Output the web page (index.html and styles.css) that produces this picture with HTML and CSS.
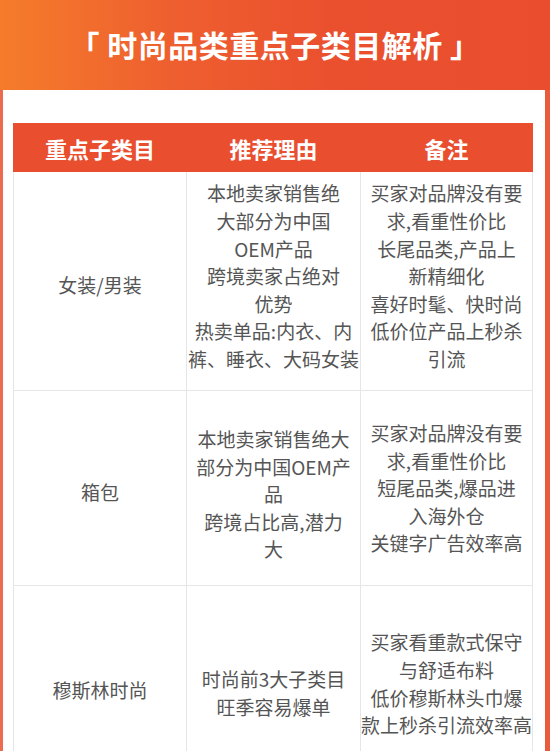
FILE: index.html
```html
<!DOCTYPE html>
<html lang="zh">
<head>
<meta charset="utf-8">
<link rel="stylesheet" href="styles.css">
</head>
<body>
<div class="page">
  <header class="banner">
    <h1 class="title">「 时尚品类重点子类目解析 」</h1>
  </header>
  <section class="panel">
    <table class="grid">
      <colgroup>
        <col class="c1"><col class="c2"><col class="c3">
      </colgroup>
      <thead>
        <tr class="head">
          <th>重点子类目</th>
          <th>推荐理由</th>
          <th>备注</th>
        </tr>
      </thead>
      <tbody>
        <tr class="r1">
          <td class="down">女装/男装</td>
          <td class="up">本地卖家销售绝<br>大部分为中国<br>OEM产品<br>跨境卖家占绝对<br>优势<br>热卖单品:内衣、内<br>裤、睡衣、大码女装</td>
          <td class="up">买家对品牌没有要<br>求,看重性价比<br>长尾品类,产品上<br>新精细化<br>喜好时髦、快时尚<br>低价位产品上秒杀<br>引流</td>
        </tr>
        <tr class="r2">
          <td class="down">箱包</td>
          <td class="lower">本地卖家销售绝大<br>部分为中国OEM产<br>品<br>跨境占比高,潜力<br>大</td>
          <td>买家对品牌没有要<br>求,看重性价比<br>短尾品类,爆品进<br>入海外仓<br>关键字广告效率高</td>
        </tr>
        <tr class="r3">
          <td>穆斯林时尚</td>
          <td class="down">时尚前3大子类目<br>旺季容易爆单</td>
          <td class="higher">买家看重款式保守<br>与舒适布料<br>低价穆斯林头巾爆<br>款上秒杀引流效率高</td>
        </tr>
      </tbody>
    </table>
  </section>
</div>
</body>
</html>
```

FILE: styles.css
```css
* { box-sizing: border-box; }
html, body { margin: 0; padding: 0; }
body {
  width: 550px;
  height: 751px;
  overflow: hidden;
  background: #ffffff;
  font-family: "Noto Sans CJK SC", "Noto Sans", sans-serif;
}
.page { width: 550px; }
.banner {
  height: 90px;
  background: linear-gradient(90deg, #f57c2b 0%, #ee5e2f 32%, #ea502e 60%, #e94d2e 100%);
  display: flex;
  align-items: center;
  justify-content: center;
}
.title {
  margin: 0;
  color: #ffffff;
  font-size: 30px;
  font-weight: 700;
  letter-spacing: 0.5px;
  line-height: 1;
  padding-bottom: 2px;
}
.panel {
  background: #ffffff;
  border-left: 3px solid #ec6a4e;
  border-right: 5px solid #ea5a3c;
  padding: 33px 13px 0 10px;
  min-height: 661px;
}
.grid {
  width: 519px;
  border-collapse: collapse;
  table-layout: fixed;
}
.c1 { width: 173px; }
.c2 { width: 174px; }
.c3 { width: 172px; }
.head th {
  height: 48px;
  background: #e94e2f;
  color: #ffffff;
  font-size: 22px;
  font-weight: 700;
  text-align: center;
  padding: 0;
  border: 1px solid #e94e2f;
}
td {
  border: 1px solid #e6e6e6;
  text-align: center;
  vertical-align: middle;
  color: #555555;
  font-size: 19px;
  line-height: 27.6px;
  padding: 0;
  white-space: nowrap;
}
.r1 td { height: 219px; }
.r2 td { height: 195px; }
.r3 td { height: 208px; }
.up { padding-bottom: 10px; }
.down { padding-top: 7px; }
.lower { padding-top: 12px; }
.higher { padding-bottom: 12px; }
```
